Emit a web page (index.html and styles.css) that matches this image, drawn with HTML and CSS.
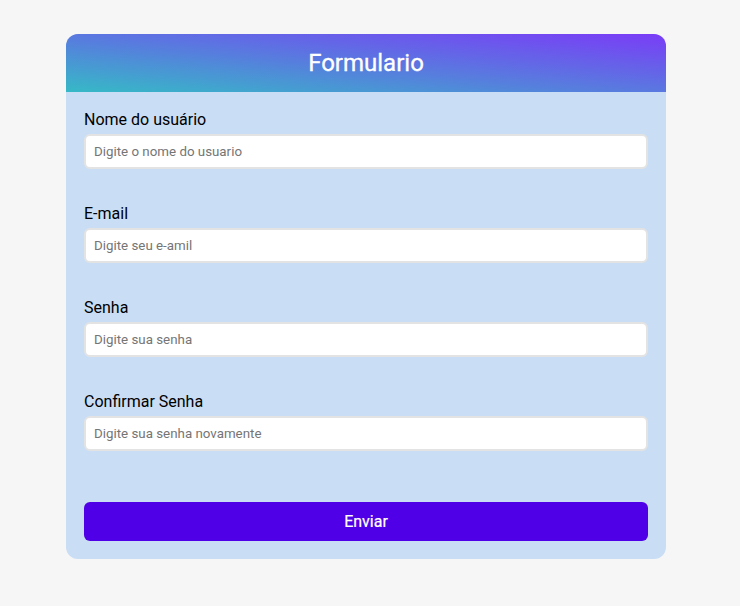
FILE: index.html
```html
<!DOCTYPE html>
<html lang="pt">
<head>
<meta charset="utf-8">
<title>Formulario</title>
<link rel="stylesheet" href="styles.css">
</head>
<body>
<main class="page">
  <form class="card">
    <header class="card-header">
      <h1 class="card-title">Formulario</h1>
    </header>
    <div class="card-body">
      <div class="field">
        <label class="label" for="nome">Nome do usuário</label>
        <input class="input" id="nome" type="text" placeholder="Digite o nome do usuario">
      </div>
      <div class="field">
        <label class="label" for="email">E-mail</label>
        <input class="input" id="email" type="text" placeholder="Digite seu e-amil">
      </div>
      <div class="field">
        <label class="label" for="senha">Senha</label>
        <input class="input" id="senha" type="password" placeholder="Digite sua senha">
      </div>
      <div class="field">
        <label class="label" for="confirmar">Confirmar Senha</label>
        <input class="input" id="confirmar" type="password" placeholder="Digite sua senha novamente">
      </div>
      <button class="button" type="button">Enviar</button>
    </div>
  </form>
</main>
</body>
</html>
```
FILE: styles.css
```css
* { box-sizing: border-box; }
html, body {
  margin: 0;
  padding: 0;
  background: #f6f6f6;
  font-family: Roboto, "Liberation Sans", Arial, sans-serif;
}
.page {
  display: flex;
  justify-content: flex-start;
  padding-top: 34px;
  padding-left: 66px;
}
.card {
  width: 600px;
  border-radius: 12px;
  overflow: hidden;
  background: #c9ddf5;
}
.card-header {
  height: 58px;
  display: flex;
  align-items: center;
  justify-content: center;
  background: linear-gradient(to top right, #36b9c6 0%, #5a78e0 50%, #7a3cf7 100%);
}
.card-title {
  margin: 0;
  color: #ffffff;
  font-size: 24px;
  font-weight: 400;
  line-height: 28px;
  -webkit-text-stroke: 0.3px #ffffff;
}
.card-body {
  padding: 18px 18px 18px;
  display: flex;
  flex-direction: column;
}
.field {
  display: flex;
  flex-direction: column;
  gap: 5px;
  margin-bottom: 35px;
}
.field:nth-of-type(4) { margin-bottom: 51px; }
.label {
  font-size: 16px;
  line-height: 19px;
  color: #000000;
}
.input {
  height: 35px;
  width: 100%;
  border: 2px solid #e3e3e3;
  border-radius: 6px;
  background: #ffffff;
  padding: 0 8px;
  font-family: inherit;
  font-size: 13.333px;
  color: #222;
  outline: none;
}
.input::placeholder { color: #757575; }
.button {
  height: 39px;
  width: 100%;
  border: none;
  border-radius: 6px;
  background: #5000e6;
  color: #ffffff;
  font-family: inherit;
  font-size: 16px;
  -webkit-text-stroke: 0.2px #ffffff;
  cursor: pointer;
}
```
